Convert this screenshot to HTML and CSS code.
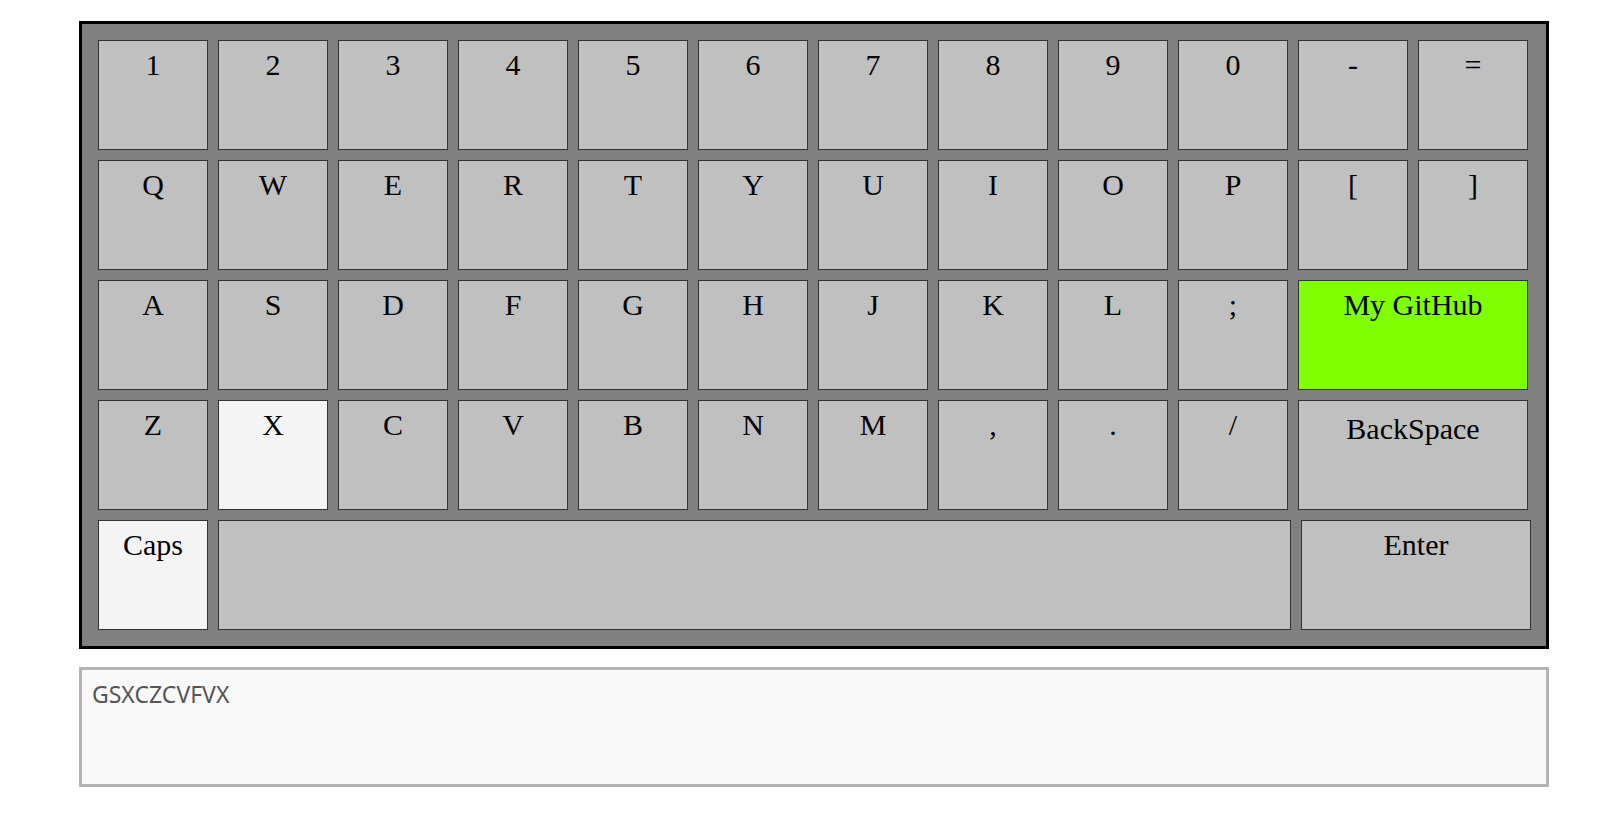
FILE: index.html
```html
<!DOCTYPE html>
<html lang="en">
<head>
    <meta charset="UTF-8">
    <meta name="viewport" content="width=device-width, initial-scale=1.0">
    <title>Virtual Keyboard</title>
    <link rel="stylesheet" href="styles.css">
</head>
<body>
    <div id="keyboard">
        <div class="row">
            <div class="key">1</div>
            <div class="key">2</div>
            <div class="key">3</div>
            <div class="key">4</div>
            <div class="key">5</div>
            <div class="key">6</div>
            <div class="key">7</div>
            <div class="key">8</div>
            <div class="key">9</div>
            <div class="key">0</div>
            <div class="key">-</div>
            <div class="key">=</div>
        </div>
        <div class="row">
            <div class="key">Q</div>
            <div class="key">W</div>
            <div class="key">E</div>
            <div class="key">R</div>
            <div class="key">T</div>
            <div class="key">Y</div>
            <div class="key">U</div>
            <div class="key">I</div>
            <div class="key">O</div>
            <div class="key">P</div>
            <div class="key">[</div>
            <div class="key">]</div>
        </div>
        <div class="row">
            <div class="key">A</div>
            <div class="key">S</div>
            <div class="key">D</div>
            <div class="key">F</div>
            <div class="key">G</div>
            <div class="key">H</div>
            <div class="key">J</div>
            <div class="key">K</div>
            <div class="key">L</div>
            <div class="key">;</div>
            <div class="key wide github">My GitHub</div>
        </div>
        <div class="row">
            <div class="key">Z</div>
            <div class="key active">X</div>
            <div class="key">C</div>
            <div class="key">V</div>
            <div class="key">B</div>
            <div class="key">N</div>
            <div class="key">M</div>
            <div class="key">,</div>
            <div class="key">.</div>
            <div class="key">/</div>
            <div class="key wide backspace">BackSpace</div>
        </div>
        <div class="row">
            <div class="key active">Caps</div>
            <div class="key space"></div>
            <div class="key wide enter">Enter</div>
        </div>
    </div>
    <textarea id="output" readonly>GSXCZCVFVX</textarea>
</body>
</html>
```

FILE: styles.css
```css
body {
    margin: 0;
    padding: 21px 0 0 79px;
    background-color: #fff;
}
#keyboard {
    width: 1470px;
    box-sizing: border-box;
    border: 3px solid #000;
    background-color: #808080;
    padding: 16px 18px 16px 16px;
    display: flex;
    flex-direction: column;
    gap: 10px;
}
.row {
    display: flex;
    gap: 10px;
}
.key {
    width: 110px;
    height: 110px;
    box-sizing: border-box;
    border: 1px solid #333;
    background-color: #c0c0c0;
    padding-top: 7px;
    text-align: center;
    font-family: "Liberation Serif", "Times New Roman", serif;
    font-size: 30px;
    color: #000;
    flex-shrink: 0;
}
.key.wide {
    width: 230px;
}
.key.space {
    width: 1073px;
}
.key.active {
    background-color: #f4f4f4;
}
.github {
    background-color: #7fff00;
}
.backspace {
    padding-top: 11px;
}
#output {
    display: block;
    width: 1470px;
    height: 120px;
    box-sizing: border-box;
    margin-top: 18px;
    border: 3px solid #b3b3b3;
    background-color: #f9f9f9;
    padding: 8px 10px 10px;
    font-family: "Noto Sans", sans-serif;
    font-size: 23px;
    color: #555;
    resize: none;
    outline: none;
}
```
